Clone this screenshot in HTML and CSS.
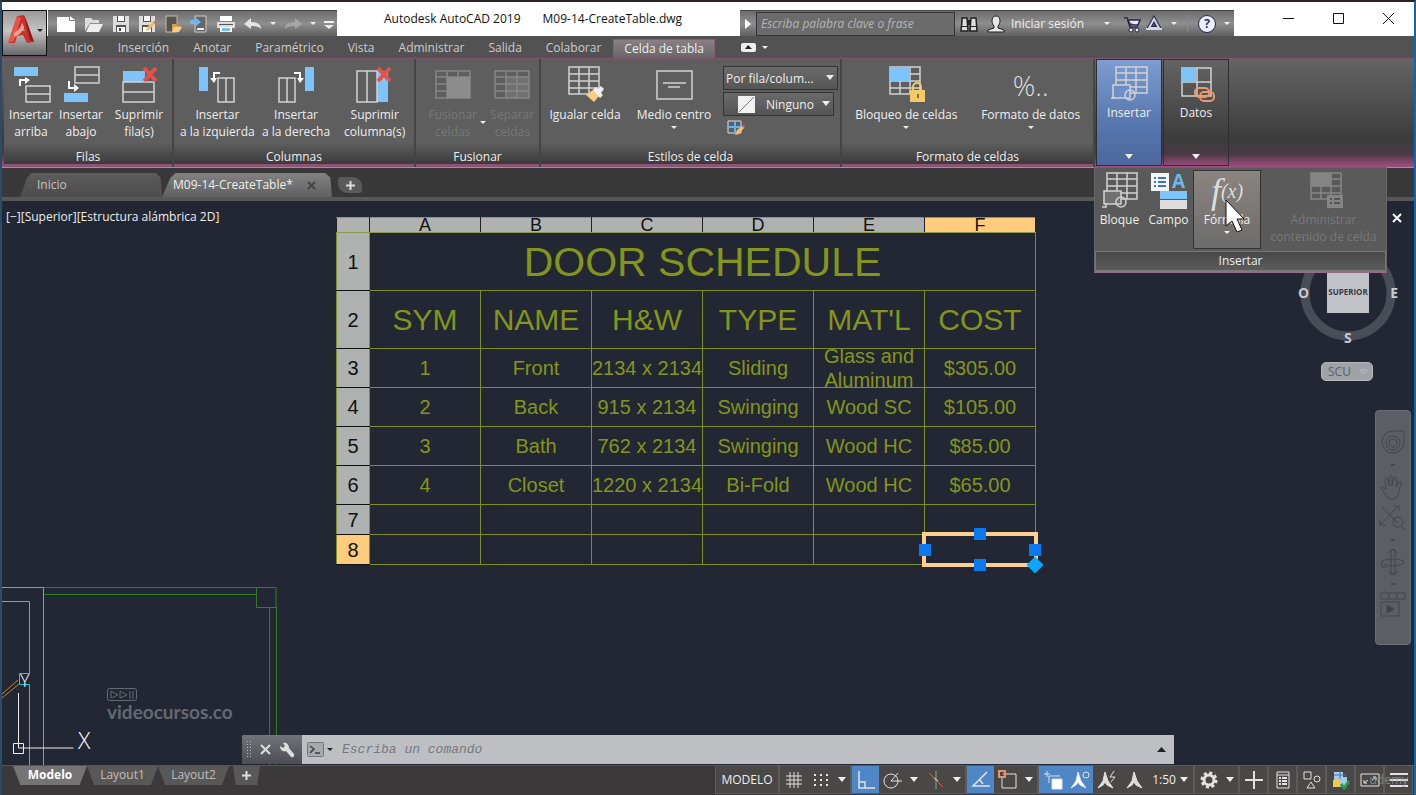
FILE: index.html
```html
<!DOCTYPE html>
<html lang="es">
<head>
<meta charset="UTF-8">
<meta name="viewport" content="width=device-width, initial-scale=1.0">
<title>Autodesk AutoCAD 2019 - M09-14-CreateTable.dwg</title>
<link rel="stylesheet" href="styles.css">
</head>
<body>
<div class="app">

<header class="header">
  <button class="app-button" aria-label="Menú de la aplicación">
    <svg width="28" height="32" viewBox="0 0 28 32"><path d="M1 29L10 2l7-1 10 27-7 1-4-8-6 1-2 7z" fill="#c8302c"/><path d="M10 2l4 2-7 23-6 2z" fill="#e8554b"/><path d="M17 1l3 7 7 20-4-2z" fill="#8d1a1c"/><path d="M12 17l3-8 3 8z" fill="#a9a0a0"/><path d="M7 19c5-3 9-8 8-11l2 5c-1 5-6 9-10 10z" fill="#f0a08c"/></svg>
    <span class="arrow dark"></span>
  </button>
  <div class="title-row">
    <div class="quick">
      <button aria-label="Nuevo"><svg width="20" height="18"><path d="M1 2h12v4h6v11H1z" fill="#fff"/><path d="M14 1l5 4h-5z" fill="#fff"/></svg></button>
      <button aria-label="Abrir"><svg width="20" height="18"><path d="M1 16V3h6l2 2h6v3H6z" fill="#ddd"/><path d="M6 9h13l-4 8H2z" fill="#eee"/></svg></button>
      <button aria-label="Guardar"><svg width="18" height="18"><path d="M1 1h16v16H1z" fill="#ddd"/><path d="M5 1h8v6H5zM4 10h10v7H4z" fill="#555"/><path d="M6 1h6v5H6zM5 12h8v5H5z" fill="#fff"/><path d="M7 13h2v3H7z" fill="#444"/></svg></button>
      <button aria-label="Guardar como"><svg width="18" height="18"><path d="M1 1h16v16H1z" fill="#ddd"/><path d="M5 1h8v6H5zM4 10h10v7H4z" fill="#555"/><path d="M6 1h6v5H6zM5 12h8v5H5z" fill="#fff"/><path d="M8 16l1-4 6-5 2 2-6 6z" fill="#f3bd62"/><path d="M15 7l2 2 1-2-1-1z" fill="#e25b4b"/></svg></button>
      <button aria-label="Abrir desde web"><svg width="18" height="18"><path d="M2 1h11v16H2z" fill="#555" stroke="#c9b9a0"/><path d="M8 16v-7h4l1 2h4v2z" fill="#d9a24a"/><path d="M10 12h8l-3 5H8z" fill="#f6cf86"/></svg></button>
      <button aria-label="Guardar en web"><svg width="18" height="18"><path d="M5 1h11v16H5z" fill="#666" stroke="#ccc"/><path d="M7 13h7v2H7z" fill="#eee"/><path d="M0 5h5V2l6 5-6 5V9H0z" fill="#6fb5ee"/></svg></button>
      <button aria-label="Imprimir"><svg width="20" height="18"><path d="M4 1h12v5H4z" fill="#fff"/><path d="M1 7h18v6H1z" fill="#ddd"/><path d="M3 9h14v1H3z" fill="#555"/><path d="M4 12h12v5H4z" fill="#fff"/><path d="M6 13h8v3H6z" fill="#7bbcf0"/></svg></button>
      <button aria-label="Deshacer"><svg width="18" height="18"><path d="M0 9l7-6v4c6 0 10 2 10 7-3-3-6-3-10-3v3z" fill="#e4e4e4"/></svg></button>
      <span class="arrow"></span>
      <button aria-label="Rehacer"><svg width="18" height="18"><path d="M18 9l-7-6v4C5 7 1 9 1 14c3-3 6-3 10-3v3z" fill="#a6a6a6"/></svg></button>
      <span class="arrow"></span>
      <button aria-label="Personalizar"><svg width="10" height="18"><path d="M0 6h10v2H0zM0 10h10l-5 4z" fill="#eee"/></svg></button>
    </div>
    <div class="title"><span>Autodesk AutoCAD 2019</span><span>M09-14-CreateTable.dwg</span></div>
    <div class="info">
      <button class="info-toggle" aria-label="Contraer búsqueda"><svg width="6" height="10"><path d="M0 0v10l6-5z" fill="#fff"/></svg></button>
      <input class="search" type="text" aria-label="Buscar" placeholder="Escriba palabra clave o frase">
      <button aria-label="Buscar ahora"><svg width="18" height="18"><path d="M2 3h5l1 13H1L2 6zM11 3h5l1 13h-7z" fill="#ddd" stroke="#222" stroke-width="1.5"/><path d="M7 5h4v5H7zM1 11h7v1H1zM10 11h7v1h-7z" fill="#222"/></svg></button>
      <button class="login"><svg width="18" height="18"><path d="M9 1c-3 0-4 2-4 5 0 2 1 4 2 5v2l-6 2v2h16v-2l-6-2v-2c1-1 2-3 2-5 0-3-1-5-4-5z" fill="#e6e6e6" stroke="#222"/></svg>Iniciar sesión<span class="arrow"></span></button>
      <button aria-label="Tienda"><svg width="18" height="18"><path d="M1 3h3l3 9h8M5 5h12l-2 5H7z" fill="#e8e8f4" stroke="#23264a" stroke-width="1.5"/><circle cx="8" cy="15" r="2" fill="#eee" stroke="#23264a"/><circle cx="14" cy="15" r="2" fill="#eee" stroke="#23264a"/></svg></button>
      <button aria-label="Autodesk App"><svg width="18" height="18"><path d="M9 4L4 13h10z" fill="#555" stroke="#23264a" stroke-width="4"/><path d="M9 4L4 13h10zM1 14h16" fill="none" stroke="#d4d6e8" stroke-width="2"/></svg><span class="arrow"></span></button>
      <span class="info-line"></span>
      <button aria-label="Ayuda" class="help"><span class="help-mark">?</span><span class="arrow"></span></button>
    </div>
    <div class="window-buttons">
      <button aria-label="Minimizar"><svg width="12" height="12"><path d="M0 5.500h11" stroke="#111"/></svg></button>
      <button aria-label="Maximizar"><svg width="12" height="12"><path d="M.5.5h10v10H.5z" fill="none" stroke="#111"/></svg></button>
      <button aria-label="Cerrar"><svg width="12" height="12"><path d="M0 0l11 11M11 0L0 11" stroke="#111"/></svg></button>
    </div>
  </div>
  <nav class="menu">
    <a href="#">Inicio</a><a href="#">Inserción</a><a href="#">Anotar</a><a href="#">Paramétrico</a><a href="#">Vista</a><a href="#">Administrar</a><a href="#">Salida</a><a href="#">Colaborar</a><a href="#" class="active">Celda de tabla</a>
    <button aria-label="Minimizar cinta"><svg width="15" height="9"><rect width="15" height="9" rx="2" fill="#eee"/><path d="M4 6l3-4 4 4z" fill="#222"/></svg><span class="arrow"></span></button>
  </nav>
</header>

<section class="ribbon">
  <div class="panel p-rows">
    <div class="tools">
      <button class="tool"><svg width="38" height="38"><path d="M2 1h24v9H2z" fill="#7cc4fa"/><path d="M14 20h24v16H14zM14 28h24" class="ln"/><path d="M8 20v-6h6" class="ar"/><path d="M13 11l5 3-5 4z" fill="#fff"/></svg><span>Insertar<br>arriba</span></button>
      <button class="tool"><svg width="38" height="38"><path d="M2 27h24v9H2z" fill="#7cc4fa"/><path d="M13 1h24v16H13zM13 9h24" class="ln"/><path d="M7 15v7h5" class="ar"/><path d="M12 18l5 4-5 4z" fill="#fff"/></svg><span>Insertar<br>abajo</span></button>
      <button class="tool"><svg width="38" height="38"><path d="M3 5h22v11H3z" fill="#7cc4fa"/><path d="M3 16h31v20H3zM3 26h31" class="ln"/><path d="M24 2l12 13M36 2L24 15" stroke="#e8504a" stroke-width="4"/></svg><span>Suprimir<br>fila(s)</span></button>
    </div>
    <h2>Filas</h2>
  </div>
  <div class="panel p-cols">
    <div class="tools">
      <button class="tool"><svg width="38" height="38"><path d="M1 1h9v24H1z" fill="#7cc4fa"/><path d="M20 12h16v24H20zM28 12v24" class="ln"/><path d="M22 7h-6v6" class="ar"/><path d="M12 12h7l-3 5z" fill="#fff"/></svg><span>Insertar<br>a la izquierda</span></button>
      <button class="tool"><svg width="38" height="38"><path d="M28 1h9v24h-9z" fill="#7cc4fa"/><path d="M2 12h16v24H2zM10 12v24" class="ln"/><path d="M17 7h6v6" class="ar"/><path d="M20 12h7l-4 5z" fill="#fff"/></svg><span>Insertar<br>a la derecha</span></button>
      <button class="tool"><svg width="38" height="38"><path d="M21 5h11v31H21z" fill="#7cc4fa"/><path d="M1 5h20v31H1zM11 5v31" class="ln"/><path d="M22 2l12 13M34 2L22 15" stroke="#e8504a" stroke-width="4"/></svg><span>Suprimir<br>columna(s)</span></button>
    </div>
    <h2>Columnas</h2>
  </div>
  <div class="panel p-merge">
    <div class="tools">
      <button class="tool off"><svg width="38" height="38"><path d="M2 5h34v27H2zM2 11h34M13 5v27M24 5v6M2 18h11M2 25h11" class="ln"/><path d="M13 11h23v21H13z" fill="#8c8c8c"/></svg><span>Fusionar<br>celdas</span></button>
      <span class="arrow merge-arrow"></span>
      <button class="tool off"><svg width="38" height="38"><path d="M2 5h34v27H2zM2 11h34M13 5v27M24 5v27M2 18h34M2 25h34" class="ln"/><path d="M13 11h23v21H13z" fill="#8c8c8c" opacity=".4"/></svg><span>Separar<br>celdas</span></button>
    </div>
    <h2>Fusionar</h2>
  </div>
  <div class="panel p-style">
    <div class="tools">
      <button class="tool w84"><svg width="38" height="38"><path d="M3 1h30v27H3zM3 8h30M3 15h30M3 22h30M13 1v27M23 1v27" class="ln"/><path d="M20 29l8-6 6 6-6 7z" fill="#f3cd83"/><path d="M27 24l3-3 2 2 3-3 3 3-3 4 2 2-3 3z" fill="#eee"/></svg><span>Igualar celda</span></button>
      <button class="tool w94"><svg width="38" height="38"><path d="M2 5h35v28H2z" class="ln"/><path d="M8 17h23M13 21h12" class="ln"/></svg><span>Medio centro</span><span class="arrow"></span></button>
      <div class="combos">
        <div class="combo"><select aria-label="Estilo de celda por fila o columna"><option>Por fila/colum...</option></select></div>
        <div class="combo short"><svg width="17" height="17"><path d="M0 0h17v17H0z" fill="#f2f2f2"/><path d="M1 16L16 1" stroke="#777"/></svg><select aria-label="Color de fondo"><option>Ninguno</option></select></div>
        <button class="mini" aria-label="Editar bordes"><svg width="18" height="16"><path d="M1 1h13v12H1z" fill="none" stroke="#ddd"/><path d="M8 1v12M1 7h13" stroke="#64b3f0" stroke-width="2"/><path d="M8 15l2-5 5-4 2 2-5 6z" fill="#f3bd72"/><path d="M15 6l2 2 1-2-1-1z" fill="#e8655a"/></svg></button>
      </div>
    </div>
    <h2>Estilos de celda</h2>
  </div>
  <div class="panel p-format">
    <div class="tools">
      <button class="tool"><svg width="38" height="38"><path d="M3 1h30v27H3zM3 8h30M3 15h30M3 22h30M13 1v27M23 1v27" class="ln"/><path d="M3 1h20v14H3z" fill="#7cc4fa"/><path d="M26 26v-5a4 4 0 018 0v5" fill="none" stroke="#f4c968" stroke-width="2"/><path d="M23 24h15v12H23z" fill="#f4c968"/><path d="M30 28h2v4h-2z" fill="#a06a20"/></svg><span>Bloqueo de celdas</span><span class="arrow"></span></button>
      <button class="tool"><span class="percent">%..</span><span>Formato de datos</span><span class="arrow"></span></button>
    </div>
    <h2>Formato de celdas</h2>
  </div>
  <div class="drop">
    <button class="drop-button selected"><svg width="38" height="38"><path d="M6 2h31v26H6zM6 8h31M6 15h31M6 22h31M16 2v26M26 2v26" class="ln"/><path d="M3 20h17v13H3z" class="ln block"/><circle cx="20" cy="30" r="5" class="ln"/><path d="M1 33h4" class="ln"/></svg>Insertar<span class="arrow big"></span></button>
    <div class="flyout">
      <div class="flyout-tools">
        <button class="tool w50"><svg width="38" height="38"><path d="M6 2h30v26H6zM6 8h30M6 15h30M6 22h30M16 2v26M26 2v26" class="ln"/><path d="M3 20h17v13H3z" class="ln block"/><circle cx="20" cy="31" r="5" class="ln"/><path d="M1 36h4v-4" class="ln"/></svg><span>Bloque</span></button>
        <button class="tool w50"><svg width="38" height="38"><path d="M1 2h18v18H1z" fill="#f4f4f4"/><path d="M4 7h2M8 7h8M4 11h2M8 11h8M4 15h2M8 15h8" stroke="#3a78b4" stroke-width="2"/><path d="M10 20h27v8H10z" fill="#7cc4fa"/><path d="M10 29h27v9H10z" fill="#ddd"/><text x="22" y="17" class="field-a">A</text></svg><span>Campo</span></button>
        <button class="tool formula"><span class="fx">f<small>(x)</small></span><span>Fórmula</span><span class="arrow"></span>
          <svg class="cursor" width="20" height="36"><path d="M1 1v26l6-5 5 11 5-2-5-11h7z" fill="#fff" stroke="#111"/></svg></button>
        <button class="tool off"><svg width="38" height="38"><path d="M6 2h30v26H6zM6 8h30M6 15h30M6 22h30M16 2v26M26 2v26" class="ln"/><path d="M6 2h20v13H6zM22 24h16v13H22z" fill="#858585"/><path d="M25 28h2M29 28h6M25 32h2M29 32h6" stroke="#555" stroke-width="2"/></svg><span>Administrar<br>contenido de celda</span></button>
      </div>
      <h2>Insertar</h2>
    </div>
  </div>
  <div class="drop">
    <button class="drop-button"><svg width="38" height="38"><path d="M5 3h29v28H5zM20 3v28M5 17h29" class="ln"/><path d="M4 2h15v15H4z" fill="#7cc4fa"/><rect x="18" y="23" width="14" height="9" rx="4" class="link"/><rect x="23" y="27" width="14" height="9" rx="4" class="link"/></svg>Datos<span class="arrow big"></span></button>
  </div>
</section>

<nav class="docs">
  <a href="#" class="doc">Inicio</a>
  <a href="#" class="doc current">M09-14-CreateTable* <svg width="9" height="9"><path d="M1 1l7 7M8 1L1 8" stroke="#444" stroke-width="2"/></svg></a>
  <button class="doc-add" aria-label="Nuevo dibujo"><svg width="9" height="9"><path d="M4.500 0v9M0 4.500h9" stroke="#ddd" stroke-width="2"/></svg></button>
</nav>

<main class="canvas">
  <p class="view-label">[−][Superior][Estructura alámbrica 2D]</p>

  <svg class="plan" width="280" height="180">
    <g fill="none" stroke="#2f7d2a"><path d="M42 2.500h232v20M42 9.500h212M254.500 2.500v20h20M267.500 22v158M274.500 22v158"/></g>
    <g fill="none" stroke="#1fc8e0"><path d="M0 2.500h41.500V180M0 16.500h27.500v72h-10v11h10V180"/></g>
    <path d="M0 109l16-14M0 113l17-14" stroke="#b9872c"/>
    <g fill="none" stroke="#eee"><path d="M11.500 158.500h10v10h-10zM16.500 108v55h55"/></g>
    <text x="18" y="102" class="ucs">Y</text>
    <text x="76" y="164" class="ucs large">X</text>
  </svg>

  <div class="watermark">
    <svg width="31" height="14"><rect x=".5" y=".5" width="29" height="12" rx="2" fill="none" stroke="#646973"/><path d="M4 3l7 4-7 3zM13 3l7 4-7 3zM23 3v8M26 3v8" fill="none" stroke="#646973"/></svg>
    <span>videocursos.co</span>
  </div>

  <table class="schedule">
    <colgroup><col class="col-num"><col><col><col><col><col><col></colgroup>
    <tr class="letters"><th></th><th>A</th><th>B</th><th>C</th><th>D</th><th>E</th><th class="hot">F</th></tr>
    <tr class="row-title"><th>1</th><td colspan="6">DOOR SCHEDULE</td></tr>
    <tr class="row-head"><th>2</th><td>SYM</td><td>NAME</td><td>H&amp;W</td><td>TYPE</td><td>MAT'L</td><td>COST</td></tr>
    <tr><th>3</th><td>1</td><td>Front</td><td>2134 x 2134</td><td>Sliding</td><td><div class="clip">Glass and<br>Aluminum</div></td><td>$305.00</td></tr>
    <tr><th>4</th><td>2</td><td>Back</td><td>915 x 2134</td><td>Swinging</td><td>Wood SC</td><td>$105.00</td></tr>
    <tr><th>5</th><td>3</td><td>Bath</td><td>762 x 2134</td><td>Swinging</td><td>Wood HC</td><td>$85.00</td></tr>
    <tr><th>6</th><td>4</td><td>Closet</td><td>1220 x 2134</td><td>Bi-Fold</td><td>Wood HC</td><td>$65.00</td></tr>
    <tr class="row-empty"><th>7</th><td></td><td></td><td></td><td></td><td></td><td></td></tr>
    <tr class="row-empty"><th class="hot">8</th><td></td><td></td><td></td><td></td><td></td><td class="picked"><div class="grips"><i class="g-top"></i><i class="g-left"></i><i class="g-right"></i><i class="g-bottom"></i><i class="g-fill"></i></div></td></tr>
  </table>

  <button class="view-close" aria-label="Cerrar vista"><svg width="10" height="10"><path d="M1 1l8 8M9 1L1 9" stroke="#fff" stroke-width="2"/></svg></button>

  <div class="cube">
    <svg width="100" height="100"><circle cx="50" cy="50" r="43" fill="none" stroke="#484d57" stroke-width="9"/></svg>
    <span class="c-o">O</span><span class="c-e">E</span><span class="c-s">S</span>
    <button class="face">SUPERIOR</button>
  </div>
  <button class="scu">SCU <svg width="9" height="6"><path d="M1 1h7L4.500 5z" fill="none" stroke="#b9bcc2"/></svg></button>

  <div class="navbar">
    <button aria-label="Rueda"><svg width="28" height="28"><path d="M14 2h11v12a11 11 0 11-11-12z"/><circle cx="14" cy="14" r="7"/><circle cx="14" cy="14" r="4"/></svg></button>
    <span class="dot"></span>
    <button aria-label="Encuadre"><svg width="28" height="28"><path d="M8 24c-2-3-4-7-6-9 1-2 3-1 5 2L6 6c1-2 3-1 3 1l1 6V4c1-2 3-2 3 0v9l2-8c1-2 3-1 3 1l-1 8 3-5c2-1 3 0 2 2-2 5-2 10-4 13-2 3-8 3-10 0z"/></svg></button>
    <button aria-label="Zoom"><svg width="28" height="28"><path d="M3 3l16 16M19 2L2 20M1 15v6h6M14 2h6v5"/><circle cx="19" cy="18" r="5"/><path d="M22 22l5 4"/></svg></button>
    <span class="dot"></span>
    <button aria-label="Órbita"><svg width="28" height="28"><path d="M12 2h4v24h-4zM3 14c0-4 22-4 22 0s-15 5-20 2M3 13v6h5M9 5l5-4 5 4M9 23l5 4 5-4"/></svg></button>
    <span class="dot"></span>
    <button aria-label="ShowMotion"><svg width="28" height="28"><path d="M2 1h24v6H2zM10 1v6M18 1v6M2 10h18v14H2z"/><path d="M8 13v8l7-4z" fill="#3c4048"/></svg></button>
  </div>

  <div class="command">
    <div class="command-tools">
      <span class="handle"></span>
      <button aria-label="Cerrar"><svg width="11" height="11"><path d="M1 1l9 9M10 1l-9 9" stroke="#ddd" stroke-width="2"/></svg></button>
      <button aria-label="Personalizar"><svg width="16" height="16"><path d="M1 4l3 2 2-2-2-3c3-1 6 1 6 5l5 6c1 2-1 4-3 3L7 9C4 10 1 8 1 4z" fill="#ddd"/></svg></button>
    </div>
    <button class="prompt" aria-label="Comandos recientes"><svg width="17" height="15"><rect x=".5" y=".5" width="16" height="14" rx="1" fill="#a8a9ad" stroke="#75777c"/><path d="M3 4l4 3-4 4M8 11h5" fill="none" stroke="#3c3c48" stroke-width="1.500"/></svg><span class="arrow dark"></span></button>
    <input type="text" aria-label="Comando" placeholder="Escriba un comando">
    <button class="history" aria-label="Historial"><svg width="9" height="5"><path d="M0 5h9L4.500 0z" fill="#222"/></svg></button>
  </div>
</main>

<footer class="footer">
  <nav class="layouts">
    <a href="#" class="layout on">Modelo</a><a href="#" class="layout">Layout1</a><a href="#" class="layout">Layout2</a>
    <button class="layout add" aria-label="Nueva presentación"><svg width="9" height="9"><path d="M4.500 0v9M0 4.500h9" stroke="#ddd" stroke-width="2"/></svg></button>
  </nav>
  <div class="status">
    <div class="group"><button class="model">MODELO</button></div>
    <div class="group">
      <button class="st" aria-label="Rejilla"><svg width="20" height="20"><path d="M6 2v16M10 2v16M14 2v16M2 6h16M2 10h16M2 14h16"/></svg></button>
      <button class="st" aria-label="Forzcursor"><svg width="20" height="20"><path d="M3 5h15M3 10h15M3 15h15" stroke-width="2" stroke-dasharray="2 4"/></svg></button>
      <button class="more" aria-label="Opciones de forzcursor"><span class="arrow big"></span></button>
    </div>
    <div class="group">
      <button class="st lit" aria-label="Orto"><svg width="20" height="20"><path d="M3 1v17h16M3 12h6v6" stroke-width="1.500"/></svg></button>
      <button class="st" aria-label="Rastreo polar"><svg width="20" height="20"><circle cx="8" cy="11" r="7"/><path d="M8 11h11M8 11l7-8"/></svg></button>
      <button class="more" aria-label="Opciones polares"><span class="arrow big"></span></button>
      <button class="st" aria-label="Isométrico"><svg width="20" height="20"><path d="M10 1v18" stroke="#6cb58c"/><path d="M3 3l14 14" stroke="#d06a62"/><path d="M8 8l4 3"/></svg></button>
      <button class="more" aria-label="Opciones isométricas"><span class="arrow big"></span></button>
    </div>
    <div class="group">
      <button class="st lit" aria-label="Rastreo"><svg width="20" height="20"><path d="M16 2L2 16h17M8 9l4 5" stroke-width="1.500"/></svg></button>
      <button class="st" aria-label="Referencia a objetos"><svg width="20" height="20"><path d="M5 4h13v14H4V6"/><path d="M1 1h6v6H1z" stroke="#e8916a" stroke-width="2"/></svg></button>
      <button class="more" aria-label="Opciones de referencia"><span class="arrow big"></span></button>
    </div>
    <div class="group">
      <button class="st lit" aria-label="Selección cíclica"><svg width="20" height="20"><path d="M4 1v6M1 4h6M6 13V6h11"/><path d="M9 9h10v10H9z" fill="#fff"/></svg></button>
      <button class="st lit" aria-label="Visibilidad de anotación"><svg width="20" height="20"><path d="M8 2l3 9 5 7-6-3-2-3-2 3-5 3 5-7z" fill="#fff"/><circle cx="16" cy="5" r="3"/></svg></button>
      <button class="st" aria-label="Escala automática"><svg width="20" height="20"><path d="M8 2l3 9 5 7-6-3-2-3-2 3-5 3 5-7z" fill="#ddd"/><path d="M17 1l-4 6h5l-4 5"/></svg></button>
      <button class="st" aria-label="Anotación"><svg width="20" height="20"><path d="M10 2l3 9 5 7-6-3-2-3-2 3-5 3 5-7z" fill="#ddd"/></svg></button>
      <button class="scale">1:50<span class="arrow big"></span></button>
    </div>
    <div class="group">
      <button class="st" aria-label="Espacio de trabajo"><svg width="20" height="20"><circle cx="10" cy="10" r="5" stroke-width="3"/><circle cx="10" cy="10" r="7" stroke-width="3" stroke-dasharray="3 2.500"/></svg></button>
      <button class="more" aria-label="Opciones de espacio"><span class="arrow big"></span></button>
    </div>
    <div class="group"><button class="st" aria-label="Monitor"><svg width="20" height="20"><path d="M10 1v18M1 10h18" stroke-width="2"/></svg></button></div>
    <div class="group"><button class="st" aria-label="Propiedades"><svg width="20" height="20"><path d="M4 2h12v16H4zM4 5h12" /><path d="M6 8h2M9 8h5M6 11h2M9 11h5M6 14h2M9 14h5" stroke-width="2"/></svg></button></div>
    <div class="group"><button class="st" aria-label="Aislar objetos"><svg width="20" height="20"><path d="M2 2h7v7H2zM9 12l4 6H5z"/><circle cx="15" cy="9" r="3"/></svg></button></div>
    <div class="group"><button class="st" aria-label="Aceleración"><svg width="20" height="20"><path d="M3 2h9v5h4v10H3z" fill="#a9cbe8" stroke="none"/><path d="M2 10h6v7H2z" fill="#f0c945" stroke="none"/><path d="M9 1v8M3 5h12" stroke="#3b78bd"/><path d="M10 14l3 4 5-7" stroke="#2f9a4c" stroke-width="3"/></svg></button></div>
    <div class="group"><button class="st" aria-label="Pantalla limpia"><svg width="20" height="20"><path d="M1 4h18v12H1zM4 13l4-3M4 10v3h3M16 7l-4 3M16 10V7h-3"/></svg></button></div>
    <div class="group"><button class="st" aria-label="Personalización"><svg width="20" height="20"><path d="M1 4h18M1 10h18M1 16h18" stroke-width="2"/></svg></button></div>
    <span class="brand">udemy</span>
  </div>
</footer>

</div>
</body>
</html>
```
FILE: styles.css
```css
* {
  box-sizing: border-box;
}
body {
  margin: 0;
  font-family: "Open Sans", "Noto Sans", sans-serif;
  font-size: 12px;
  color: #eee;
  background: #222733;
}
button {
  font: inherit;
  color: inherit;
  background: none;
  border: none;
  padding: 0;
  margin: 0;
}
a {
  color: inherit;
  text-decoration: none;
}
h2 {
  margin: 0;
  font-size: 12px;
  font-weight: normal;
  line-height: 18px;
  text-align: center;
}
svg {
  display: block;
  flex: none;
}
.app {
  display: flex;
  flex-direction: column;
  height: 100vh;
  border-top: 2px solid #2a2426;
  border-left: 2px solid #2f4a64;
  border-right: 2px solid #0b68ae;
  overflow: hidden;
}
.arrow {
  flex: none;
  width: 0;
  height: 0;
  border: 3px solid transparent;
  border-top-color: #eee;
  border-bottom: none;
}
.arrow.dark {
  border-top-color: #222;
}
.arrow.big {
  border-width: 5px 4px 0;
}
.ln {
  fill: none;
  stroke: #d2d2d2;
  stroke-width: 1.5;
}
.ar {
  fill: none;
  stroke: #fff;
  stroke-width: 2;
}
.link {
  fill: none;
  stroke: #ee9a68;
  stroke-width: 2;
}
.block {
  fill: #707070;
}

/* cabecera */
.header {
  display: grid;
  grid-template-columns: 46px 1fr;
  grid-template-rows: 34px 22px;
  background: linear-gradient(#fff 34px, #525252 34px);
}
.app-button {
  grid-row: 1 / 3;
  display: flex;
  align-items: center;
  justify-content: center;
  gap: 2px;
  margin: 8px 1px 2px 0;
  padding-bottom: 6px;
  border: 1px solid #111;
  background: linear-gradient(#9a9a9a, #c4c4c4 45%, #686868);
}
.title-row {
  display: flex;
  align-items: stretch;
  color: #111;
}
.quick,
.info {
  display: flex;
  align-items: center;
  margin-top: 8px;
  color: #eee;
  background: linear-gradient(#6d6d6d, #8e8e8e 50%, #606060);
  border-top: 1px solid #444;
}
.quick {
  width: 289px;
  gap: 8px;
  padding-left: 8px;
}
.title {
  display: flex;
  gap: 22px;
  flex: 1 1 403px;
  padding-left: 47px;
  line-height: 33px;
  white-space: nowrap;
}
.info {
  flex: 0 1 494px;
}
.info button {
  display: flex;
  align-items: center;
  justify-content: center;
  gap: 8px;
  min-width: 27px;
  white-space: nowrap;
}
.info .info-toggle {
  min-width: 16px;
}
.search {
  flex: 1;
  min-width: 0;
  height: 24px;
  padding: 0 4px;
  font: italic 12px "Open Sans", sans-serif;
  color: #ddd;
  background: #6b6b6b;
  border: 1px solid #333;
}
.search::placeholder {
  color: #b4b4b4;
}
.info .login {
  gap: 6px;
  padding: 0 8px 0 5px;
}
.login .arrow {
  margin-left: 14px;
}
.info-line {
  width: 1px;
  height: 17px;
  margin: 0 10px;
  background: #888;
}
.help {
  padding-right: 4px;
}
.help-mark {
  width: 18px;
  height: 18px;
  border: 1px solid #23264a;
  border-radius: 50%;
  background: #eef;
  color: #1d2f8c;
  font-weight: bold;
  line-height: 16px;
  text-align: center;
}
.window-buttons {
  flex: 0 0 auto;
  display: flex;
  margin-left: 30px;
}
.window-buttons button {
  display: flex;
  align-items: center;
  justify-content: center;
  width: 50px;
}
.menu {
  display: flex;
  padding-left: 4px;
  color: #ccc;
  line-height: 24px;
}
.menu a {
  padding: 0 12px;
}
.menu .active {
  margin-top: 3px;
  padding: 0 10px;
  line-height: 18px;
  color: #eee;
  background: linear-gradient(#8a8085, #666);
  border: 1px solid #8a5a76;
  border-bottom: none;
}
.menu button {
  display: flex;
  align-items: center;
  gap: 6px;
  margin-left: 26px;
}

/* cinta de opciones */
.ribbon {
  display: flex;
  height: 110px;
  padding-left: 2px;
  background: linear-gradient(#646464, #3c3c3c 75%, #4a3a44 88%, #a14f82);
  border-top: 1px solid #83526f;
  border-bottom: 1px solid #a98a9d;
}
.panel {
  display: flex;
  flex-direction: column;
  flex: none;
  background: linear-gradient(#5e5e5e 84px, #3a3a3a 105px, #8d5377 105px);
  border-right: 2px solid #454545;
  padding-bottom: 1px;
}
.panel h2 {
  margin-top: auto;
}
.p-rows {
  width: 170px;
}
.p-cols {
  width: 242px;
}
.p-merge {
  width: 125px;
}
.p-style {
  width: 301px;
}
.p-format {
  width: 253px;
}
.tools {
  display: flex;
  padding: 7px 0 0 2px;
}
.tool {
  flex: 1;
  display: flex;
  flex-direction: column;
  align-items: center;
  line-height: 17px;
  white-space: nowrap;
}
.tool svg {
  margin-bottom: 2px;
}
.tool .arrow {
  margin-top: 3px;
}
.p-rows .tool {
  flex: 0 0 50px;
}
.p-rows .tool:last-child {
  flex: 1;
}
.p-cols .tools {
  padding-left: 4px;
}
.p-merge .tools {
  padding-left: 10px;
}
.merge-arrow {
  align-self: flex-end;
  margin-bottom: 16px;
}
.tool.off {
  color: #787878;
}
.off .ln {
  stroke: #868686;
}
.tool.w84 {
  flex: 0 0 84px;
}
.tool.w94 {
  flex: 0 0 94px;
}
.tool.w50 {
  flex: 0 0 49px;
}
.combos {
  display: flex;
  flex-direction: column;
  gap: 2px;
  width: 115px;
  margin-left: 2px;
}
.combo {
  position: relative;
  display: flex;
  align-items: center;
  height: 24px;
  background: linear-gradient(#6a6a6a, #555);
  border: 1px solid #333;
}
.combo.short {
  width: 111px;
  padding-left: 14px;
}
.combo::after {
  content: '';
  position: absolute;
  right: 3px;
  top: 8px;
  border: 4px solid transparent;
  border-top: 5px solid #eee;
  border-bottom: none;
}
.combo select {
  flex: 1;
  min-width: 0;
  height: 22px;
  appearance: none;
  padding: 0 2px;
  font: inherit;
  color: inherit;
  background: none;
  border: none;
}
.combo.short select {
  padding-left: 11px;
}
.mini {
  width: 26px;
  height: 20px;
}
.mini svg {
  margin: 2px 4px;
}
.percent {
  height: 40px;
  font-size: 28px;
  font-weight: 300;
  line-height: 38px;
  color: #ddd;
}
.drop {
  position: relative;
  flex: 0 0 67px;
  left: 1px;
}
.drop-button {
  display: flex;
  flex-direction: column;
  align-items: center;
  width: 66px;
  height: 107px;
  padding: 5px 0 6px;
  border: 1px solid #2d2d36;
}
.drop-button svg {
  margin-bottom: 1px;
}
.drop-button .arrow {
  margin-top: auto;
}
.selected {
  background: linear-gradient(#7d9cd0, #5877b0 60%, #4c689c);
}
.selected .block {
  fill: #6d8fc6;
}
.flyout {
  position: absolute;
  z-index: 5;
  top: 108px;
  left: -2px;
  width: 293px;
  background: #5a5a5a;
  border: 1px solid #666;
  border-bottom: 2px solid #9b6a89;
}
.flyout h2 {
  border: 1px solid #777;
  background: linear-gradient(#484848, #5c5c5c);
}
.flyout-tools {
  display: flex;
  height: 83px;
  padding: 2px 0;
}
.flyout-tools .tool {
  padding-top: 1px;
}
.flyout-tools .formula {
  position: relative;
  flex: 0 0 68px;
  background: linear-gradient(#8b8480, #6c6c6c);
  border: 1px solid #333;
  padding-top: 0;
}
.fx {
  height: 40px;
  font: italic 36px/40px "Liberation Serif", serif;
  color: #ddd;
}
.fx small {
  font-size: 20px;
  vertical-align: 5px;
}
.cursor {
  position: absolute;
  left: 31px;
  top: 28px;
}
.tool svg {
  overflow: visible;
}
.field-a {
  font: bold 19px "Open Sans", sans-serif;
  fill: #6db6ee;
}

/* pestañas de dibujo */
.docs {
  display: flex;
  align-items: flex-end;
  height: 33px;
  padding-left: 18px;
  background: #383838;
  border-bottom: 4px solid #575757;
}
.doc {
  width: 142px;
  height: 24px;
  padding-left: 17px;
  line-height: 24px;
  color: #c4c4c4;
  background: linear-gradient(#5c5c5c, #4c4c4c);
  clip-path: polygon(0 100%, 5% 20%, 8% 0, 96% 0, 99% 20%, 100% 100%);
}
.doc.current {
  display: flex;
  align-items: center;
  gap: 14px;
  width: 170px;
  padding-left: 11px;
  color: #eee;
  background: linear-gradient(#838383, #606060);
  white-space: nowrap;
}
.doc-add {
  display: flex;
  align-items: center;
  justify-content: center;
  width: 24px;
  height: 16px;
  margin: 0 0 4px 6px;
  background: #5a5a5a;
  border-radius: 3px 9px 3px 9px;
}

/* área de dibujo */
.canvas {
  position: relative;
  flex: 1;
  background: #222733;
}
.view-label {
  margin: 0;
  padding: 7px 4px;
  line-height: 17px;
}
.plan {
  position: absolute;
  left: 0;
  bottom: 0;
}
.ucs {
  font: 300 18px "Open Sans", sans-serif;
  fill: #fff;
}
.ucs.large {
  font-size: 23px;
}
.watermark {
  position: absolute;
  left: 105px;
  bottom: 43px;
  color: #646973;
  font: bold 19px/20px Lato, sans-serif;
}
.schedule {
  position: absolute;
  top: 16px;
  left: 334px;
  width: 700px;
  table-layout: fixed;
  border-collapse: collapse;
  font: 20px/24px "Liberation Sans", Arial, sans-serif;
  color: #84951c;
}
.col-num {
  width: 33px;
}
.schedule tr {
  height: 39px;
}
.schedule th,
.schedule td {
  padding: 0;
  text-align: center;
  white-space: nowrap;
  border: 1px solid #7d8e22;
}
.schedule th {
  font-weight: normal;
  color: #111;
  background: #b0b2b2;
  border-top-color: #111;
  border-bottom-color: #111;
}
.schedule .letters {
  height: 15px;
  font-size: 18px;
  line-height: 14px;
}
.schedule .letters th {
  border-color: #8d9a4c #222;
}
.schedule .row-title {
  height: 58px;
  font-size: 41px;
}
.schedule .row-head {
  height: 58px;
  font-size: 30px;
}
.schedule .row-empty {
  height: 30px;
}
.row-title th,
.row-head th {
  font-size: 20px;
}
.schedule .hot {
  background: #ffcb7c;
}
.clip {
  display: flex;
  align-items: center;
  justify-content: center;
  height: 38px;
  overflow: hidden;
}
.grips {
  position: relative;
  height: 29px;
  outline: 4px solid #fdcf90;
  outline-offset: -1px;
}
.grips i {
  position: absolute;
  width: 12px;
  height: 12px;
  background: #0a78f0;
}
.g-top {
  left: calc(50% - 6px);
  top: -7px;
}
.g-bottom {
  left: calc(50% - 6px);
  bottom: -7px;
}
.g-left {
  left: -6px;
  top: 9px;
}
.g-right {
  right: -6px;
  top: 9px;
}
.grips .g-fill {
  right: -6px;
  bottom: -7px;
  background: #0aa6ff;
  transform: rotate(45deg);
}
.view-close {
  position: absolute;
  right: 12px;
  top: 12px;
}
.cube {
  position: absolute;
  right: 16px;
  top: 42px;
  width: 100px;
  height: 100px;
  font-weight: bold;
  font-size: 14px;
  line-height: 16px;
  color: #c8ccd2;
}
.cube span {
  position: absolute;
}
.c-o {
  left: 0;
  top: 42px;
}
.c-e {
  right: 0;
  top: 42px;
}
.c-s {
  left: 46px;
  bottom: -3px;
}
.face {
  position: absolute;
  left: 29px;
  top: 28px;
  width: 42px;
  height: 42px;
  font-size: 8px;
  font-weight: bold;
  text-align: center;
  color: #3a3a44;
  background: #c2c3c8;
}
.scu {
  position: absolute;
  right: 41px;
  top: 161px;
  display: flex;
  align-items: center;
  gap: 8px;
  width: 52px;
  height: 19px;
  padding-left: 6px;
  color: #5c6068;
  background: #9fa2a9;
  border: 1px solid #b4b6bc;
  border-radius: 5px;
}
.navbar {
  position: absolute;
  right: 3px;
  top: 209px;
  display: flex;
  flex-direction: column;
  align-items: center;
  gap: 3px;
  width: 36px;
  height: 235px;
  padding-top: 18px;
  background: #5b5f65;
  border: 1px solid #6a6e74;
  border-radius: 4px;
}
.navbar svg {
  fill: none;
  stroke: #41454c;
}
.dot {
  width: 4px;
  height: 2px;
  margin: 4px 0;
  background: #44484e;
}
.command {
  position: absolute;
  left: 240px;
  right: 240px;
  bottom: 1px;
  display: flex;
  height: 29px;
  background: #bebfc3;
  border-radius: 3px 0 0 3px;
  overflow: hidden;
}
.command-tools {
  display: flex;
  align-items: center;
  gap: 8px;
  width: 60px;
  padding-left: 4px;
  background: linear-gradient(#727378, #4c4d52);
}
.handle {
  width: 6px;
  height: 19px;
  background: radial-gradient(#bbb 1px, transparent 1px) 0 0 / 3px 3px;
}
.prompt {
  display: flex;
  align-items: center;
  gap: 3px;
  padding: 0 3px 0 5px;
}
.command input {
  flex: 1;
  min-width: 0;
  padding: 0 6px;
  font: italic 13px "Liberation Mono", monospace;
  color: #333;
  background: none;
  border: none;
}
.command input::placeholder {
  color: #77787c;
}
.history {
  width: 17px;
}

/* barra de estado */
.footer {
  display: flex;
  justify-content: space-between;
  align-items: flex-start;
  height: 30px;
  background: #3b3939;
  border-top: 1px solid #555;
}
.layouts {
  display: flex;
  padding-left: 11px;
}
.layout {
  width: 71px;
  height: 19px;
  line-height: 18px;
  text-align: center;
  color: #c4bcb8;
  background: #585858;
  clip-path: polygon(0 0, 100% 0, 90% 100%, 10% 100%);
}
.layout.on {
  width: 74px;
  color: #fff;
  font-weight: bold;
  background: #747474;
}
.layout.add {
  display: flex;
  align-items: center;
  justify-content: center;
  width: 27px;
  margin-left: 4px;
}
.status {
  position: relative;
  display: flex;
  gap: 2px;
  padding-right: 2px;
}
.group {
  display: flex;
  height: 27px;
  background: #4a4747;
  outline: 1px solid #5c5a5a;
}
.model {
  width: 62px;
}
.st {
  display: flex;
  align-items: center;
  justify-content: center;
  width: 27px;
}
.st svg {
  fill: none;
  stroke: #e2e2e2;
}
.lit {
  background: #4f86c6;
}
.more {
  display: flex;
  align-items: center;
  justify-content: center;
  width: 16px;
}
.scale {
  display: flex;
  align-items: center;
  justify-content: center;
  gap: 4px;
  width: 46px;
}
.brand {
  position: absolute;
  right: 6px;
  top: 5px;
  font-size: 12px;
  color: #a09d9d;
  opacity: 0.7;
}
```
